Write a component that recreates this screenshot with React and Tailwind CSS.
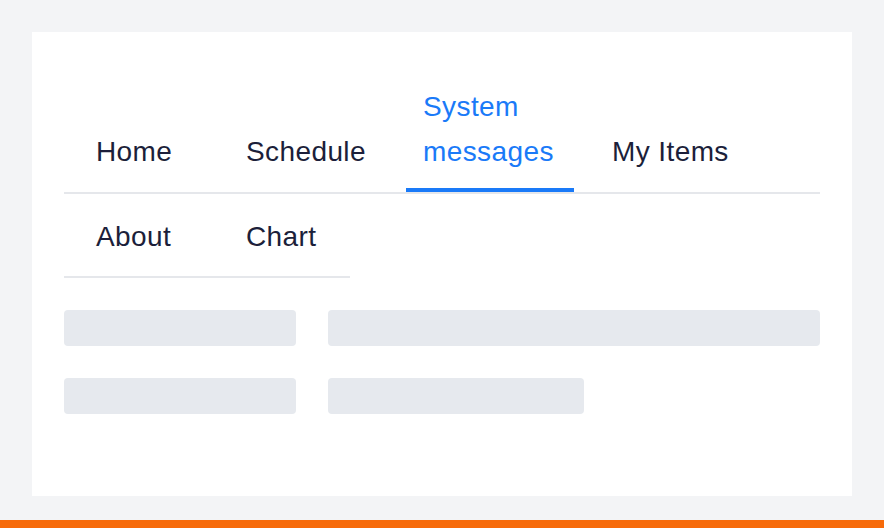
const firstRow = [
  { label: "Home", className: "w-[150px] pl-8" },
  { label: "Schedule", className: "w-[192px] pl-8" },
  { label: "System messages", className: "w-[168px] pl-[17px] pr-4", active: true },
  { label: "My Items", className: "pl-[38px]" },
];

const secondRow = [
  { label: "About", className: "w-[150px] pl-8" },
  { label: "Chart", className: "pl-8 pr-8" },
];

function Tab({ label, className, active, pb }) {
  return (
    <div
      className={`relative shrink-0 pt-5 ${pb} ${className} ${
        active ? "text-[#1a7af8]" : "text-[#1c1f3a]"
      }`}
    >
      <span className="block">{label}</span>
      {active && <div className="absolute left-0 right-0 bottom-0 h-1 bg-[#1a7af8]" />}
    </div>
  );
}

export default function App() {
  return (
    <div
      className="min-h-screen bg-[#f3f4f6] flex flex-col"
      style={{ fontFamily: '"Liberation Sans", Arial, sans-serif' }}
    >
      <div className="pt-8 px-8 pb-6">
        <div className="bg-white h-[464px] p-8">
          <div className="text-[28px] leading-[45px] tracking-[0.4px]">
            <div className="flex items-end border-b-2 border-[#e5e7eb]">
              {firstRow.map((t) => (
                <Tab key={t.label} {...t} pb="pb-[18px]" />
              ))}
            </div>
            <div className="flex items-end border-b-2 border-[#e5e7eb] w-[286px]">
              {secondRow.map((t) => (
                <Tab key={t.label} {...t} pb="pb-[17px]" />
              ))}
            </div>
          </div>

          <div className="mt-8 flex flex-col gap-8">
            <div className="flex gap-8">
              <div className="h-9 w-[232px] rounded bg-[#e6e9ee]" />
              <div className="h-9 flex-1 rounded bg-[#e6e9ee]" />
            </div>
            <div className="flex gap-8">
              <div className="h-9 w-[232px] rounded bg-[#e6e9ee]" />
              <div className="h-9 w-[256px] rounded bg-[#e6e9ee]" />
            </div>
          </div>
        </div>
      </div>
      <div className="h-2 bg-[#f76b0a]" />
    </div>
  );
}
